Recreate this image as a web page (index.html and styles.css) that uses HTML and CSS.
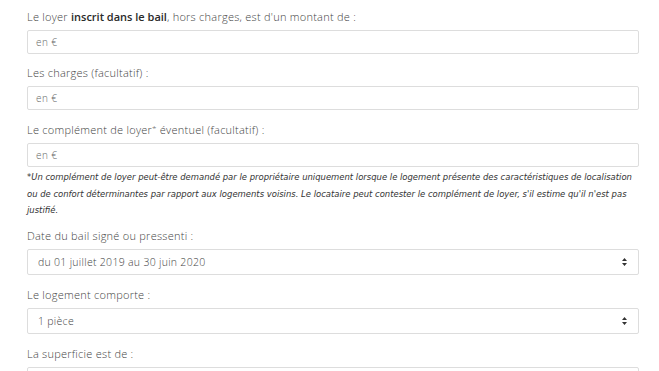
FILE: index.html
```html
<!DOCTYPE html>
<html lang="fr">
<head>
<meta charset="utf-8">
<title>Formulaire loyer</title>
<link rel="stylesheet" href="styles.css">
</head>
<body>
<form class="form">
  <div class="field">
    <label class="label">Le loyer <strong>inscrit dans le bail</strong>, hors charges, est d'un montant de :</label>
    <div class="input"><span class="placeholder">en €</span></div>
  </div>
  <div class="field">
    <label class="label">Les charges (facultatif) :</label>
    <div class="input"><span class="placeholder">en €</span></div>
  </div>
  <div class="field field-note">
    <label class="label">Le complément de loyer<span class="star">*</span> éventuel (facultatif) :</label>
    <div class="input"><span class="placeholder">en €</span></div>
    <p class="note">*Un complément de loyer peut-être demandé par le propriétaire uniquement lorsque le logement présente des caractéristiques de localisation<br>ou de confort déterminantes par rapport aux logements voisins. Le locataire peut contester le complément de loyer, s'il estime qu'il n'est pas<br>justifié.</p>
  </div>
  <div class="field">
    <label class="label">Date du bail signé ou pressenti :</label>
    <div class="select"><span class="value">du 01 juillet 2019 au 30 juin 2020</span>
      <svg class="arrows" width="5" height="8" viewBox="0 0 5 8"><path d="M2.5 0 L5 3 L0 3 Z M2.5 8 L5 5 L0 5 Z" fill="#333"/></svg>
    </div>
  </div>
  <div class="field">
    <label class="label">Le logement comporte :</label>
    <div class="select"><span class="value">1 pièce</span>
      <svg class="arrows" width="5" height="8" viewBox="0 0 5 8"><path d="M2.5 0 L5 3 L0 3 Z M2.5 8 L5 5 L0 5 Z" fill="#333"/></svg>
    </div>
  </div>
  <div class="field">
    <label class="label">La superficie est de :</label>
    <div class="input input-cut"></div>
  </div>
</form>
</body>
</html>
```
FILE: styles.css
```css
html, body {
  margin: 0;
  background: #fff;
}
body {
  padding: 9px 20px 0 27px;
  font-family: "Open Sans", "DejaVu Sans", sans-serif;
  overflow: hidden;
}
.form {
  display: flex;
  flex-direction: column;
  width: 612px;
}
.field {
  display: flex;
  flex-direction: column;
}
.label {
  display: block;
  font-size: 11px;
  letter-spacing: 0.25px;
  line-height: 16px;
  color: #444;
  font-weight: 300;
  margin-bottom: 5px;
}
.label strong {
  color: #2a2a2a;
  font-weight: 600;
  letter-spacing: 0;
}
.star {
  font-size: 8px;
  vertical-align: 2px;
}
.input {
  box-sizing: border-box;
  height: 24px;
  border: 1px solid #ddd;
  border-radius: 2px;
  display: flex;
  align-items: center;
  padding-left: 8px;
  margin-bottom: 11px;
}
.placeholder {
  font-size: 10px;
  letter-spacing: 0.4px;
  font-weight: 300;
  color: #666;
}
.field-note .input {
  margin-bottom: 2px;
}
.note {
  margin: 0 0 9.5px;
  font-family: "DejaVu Sans", sans-serif;
  font-size: 8.45px;
  line-height: 16.5px;
  font-style: italic;
  color: #333;
  white-space: nowrap;
}
.select {
  box-sizing: border-box;
  height: 26px;
  border: 1px solid #ddd;
  border-radius: 2px;
  display: flex;
  align-items: center;
  justify-content: space-between;
  padding: 0 11px 0 10px;
  margin-bottom: 12px;
}
.value {
  font-size: 10.5px;
  letter-spacing: 0.3px;
  font-weight: 300;
  color: #444;
}
.arrows {
  display: block;
}
```
